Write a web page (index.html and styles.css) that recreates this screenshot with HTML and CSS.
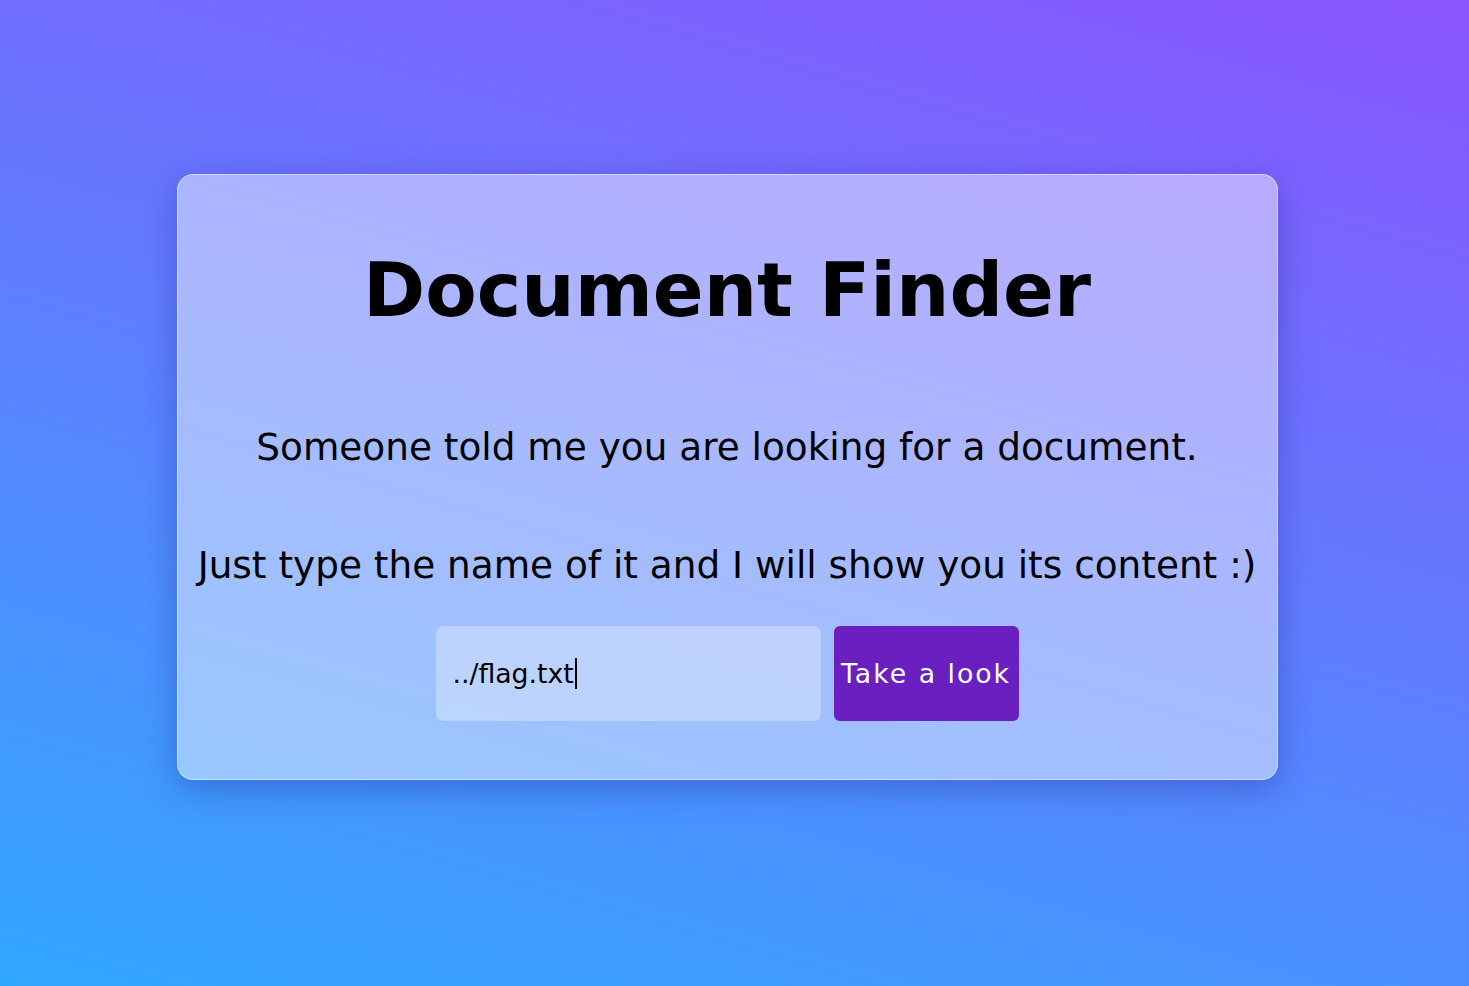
FILE: index.html
```html
<!DOCTYPE html>
<html lang="en">
<head>
<meta charset="utf-8">
<title>Document Finder</title>
<link rel="stylesheet" href="styles.css">
</head>
<body>
<main class="page">
  <section class="card">
    <h1 class="title">Document Finder</h1>
    <p class="lead">Someone told me you are looking for a document.</p>
    <p class="lead lead-second">Just type the name of it and I will show you its content :)</p>
    <form class="finder" onsubmit="return false;">
      <div class="field"><span class="field-text">../flag.txt</span><span class="caret"></span></div>
      <button class="btn" type="submit">Take a look</button>
    </form>
  </section>
</main>
</body>
</html>
```

FILE: styles.css
```css
html, body {
  margin: 0;
  padding: 0;
  height: 100%;
}

body {
  font-family: "DejaVu Sans", "Liberation Sans", sans-serif;
  background: linear-gradient(16deg, #31a8ff 0%, #8b55ff 100%);
  color: #000;
}

.page {
  box-sizing: border-box;
  height: 100vh;
  display: flex;
  align-items: center;
  justify-content: center;
  padding: 0 15px 32px 0;
}

.card {
  box-sizing: border-box;
  width: 1101px;
  height: 606px;
  border-radius: 16px;
  background: rgba(255, 255, 255, 0.46);
  border: 1px solid rgba(255, 255, 255, 0.45);
  box-shadow: 0 8px 32px 0 rgba(31, 38, 135, 0.37);
  display: flex;
  flex-direction: column;
  align-items: center;
  padding-top: 70px;
}

.title {
  margin: 0;
  font-size: 75px;
  line-height: 91px;
  font-weight: bold;
}

.lead {
  margin: 88px 0 0;
  font-size: 37.4px;
  line-height: 46px;
  white-space: nowrap;
}

.lead-second {
  margin-top: 72px;
}

.finder {
  margin-top: 38px;
  display: flex;
  gap: 13px;
}

.field {
  box-sizing: border-box;
  width: 385px;
  height: 95px;
  border-radius: 8px;
  background: rgba(255, 255, 255, 0.3);
  display: flex;
  align-items: center;
  padding-left: 17px;
  font-size: 26.7px;
}

.caret {
  display: inline-block;
  width: 2.5px;
  height: 31px;
  background: #000;
  margin-left: 1px;
}

.btn {
  box-sizing: border-box;
  width: 185px;
  height: 95px;
  border: none;
  border-radius: 6px;
  background: #6a20c0;
  color: #fff;
  font-family: "DejaVu Sans", "Liberation Sans", sans-serif;
  font-size: 26.7px;
  letter-spacing: 2px;
  padding: 0;
  cursor: pointer;
}
```
